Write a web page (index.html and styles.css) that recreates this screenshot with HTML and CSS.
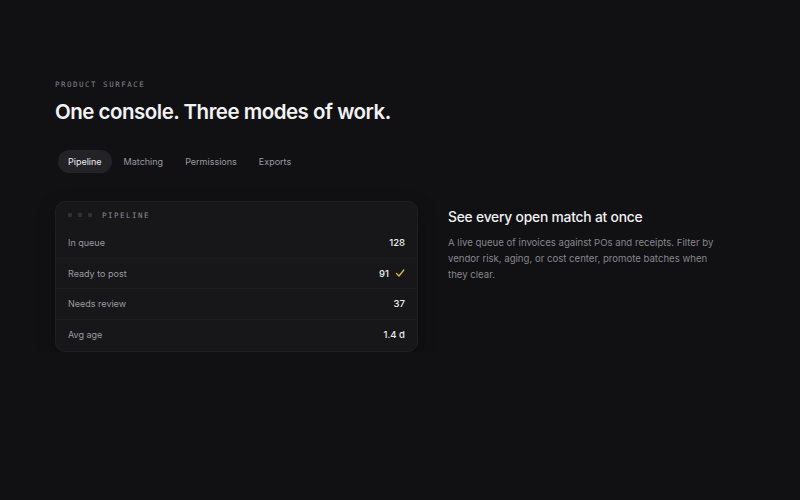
FILE: index.html
```html
<!DOCTYPE html>
<html lang="en">
<head>
    <meta charset="UTF-8">
    <meta name="viewport" content="width=device-width, initial-scale=1.0">
    <title>Product surface</title>
    <link rel="stylesheet" href="styles.css">
</head>
<body>
    <section class="surface">
        <p class="eyebrow">Product surface</p>
        <h1 class="title">One console. Three modes of work.</h1>

        <nav class="tabs">
            <span class="tab active">Pipeline</span>
            <span class="tab">Matching</span>
            <span class="tab">Permissions</span>
            <span class="tab">Exports</span>
        </nav>

        <div class="split">
            <div class="panel">
                <div class="panel-head">
                    <span class="dots"><i></i><i></i><i></i></span>
                    <span class="panel-name">Pipeline</span>
                </div>
                <div class="row"><span>In queue</span><b>128</b></div>
                <div class="row"><span>Ready to post</span><b>91 <svg class="check" width="10" height="10" viewBox="0 0 10 10"><path d="M1.5 5.5 L4 8 L8.8 2" fill="none" stroke="#d9b84a" stroke-width="1.3" stroke-linecap="round" stroke-linejoin="round"/></svg></b></div>
                <div class="row"><span>Needs review</span><b>37</b></div>
                <div class="row"><span>Avg age</span><b>1.4 d</b></div>
            </div>

            <div class="copy">
                <h2>See every open match at once</h2>
                <p>A live queue of invoices against POs and receipts. Filter by vendor risk, aging, or cost center, promote batches when they clear.</p>
            </div>
        </div>
    </section>
</body>
</html>
```

FILE: styles.css
```css
* {
    margin: 0;
    padding: 0;
    box-sizing: border-box;
}
body {
    background-color: #111114;
    color: #ececee;
    font-family: Inter, "Liberation Sans", sans-serif;
    overflow: hidden;
}
.surface {
    padding: 80px 55px 0;
}
.eyebrow {
    font-family: "DejaVu Sans Mono", "Liberation Mono", monospace;
    font-size: 7.5px;
    letter-spacing: 1.5px;
    text-transform: uppercase;
    color: #86868c;
    line-height: 10px;
}
.title {
    margin-top: 9px;
    font-size: 20.5px;
    font-weight: 600;
    letter-spacing: -0.5px;
    line-height: 26px;
    color: #f2f2f4;
}
.tabs {
    display: flex;
    gap: 2px;
    margin-top: 25px;
    margin-left: 3px;
}
.tab {
    font-size: 9px;
    color: #9a9aa0;
    padding: 0 10px;
    height: 23px;
    line-height: 23px;
    border-radius: 12px;
}
.tab.active {
    background-color: #232327;
    color: #ececee;
}
.split {
    display: grid;
    grid-template-columns: 363px 1fr;
    gap: 30px;
    margin-top: 28px;
}
.panel {
    background-color: #17171a;
    border: 1px solid #1f1f23;
    border-radius: 10px;
    padding: 0 12px 1px;
    box-shadow: 0 6px 18px rgba(0, 0, 0, 0.35);
}
.panel-head {
    display: flex;
    align-items: center;
    gap: 10px;
    height: 26px;
}
.dots {
    display: flex;
    gap: 6px;
}
.dots i {
    width: 4px;
    height: 4px;
    background-color: #303036;
    border-radius: 1px;
}
.panel-name {
    font-family: "DejaVu Sans Mono", "Liberation Mono", monospace;
    font-size: 7.5px;
    letter-spacing: 1.5px;
    text-transform: uppercase;
    color: #8a8a90;
}
.row {
    display: flex;
    justify-content: space-between;
    align-items: center;
    height: 30.5px;
    font-size: 9px;
    color: #9a9aa0;
    border-bottom: 1px solid #1d1d21;
    margin: 0 -12px;
    padding: 0 12px;
}
.row:last-child {
    border-bottom: none;
}
.row b {
    display: flex;
    align-items: center;
    gap: 6px;
    font-weight: 500;
    font-size: 9.5px;
    color: #ececee;
}
.copy {
    padding-top: 6px;
}
.copy h2 {
    font-size: 13.8px;
    font-weight: 500;
    letter-spacing: -0.2px;
    color: #f0f0f2;
    line-height: 20px;
}
.copy p {
    margin-top: 8px;
    font-size: 9.6px;
    line-height: 16px;
    color: #86868c;
    max-width: 272px;
}
```
